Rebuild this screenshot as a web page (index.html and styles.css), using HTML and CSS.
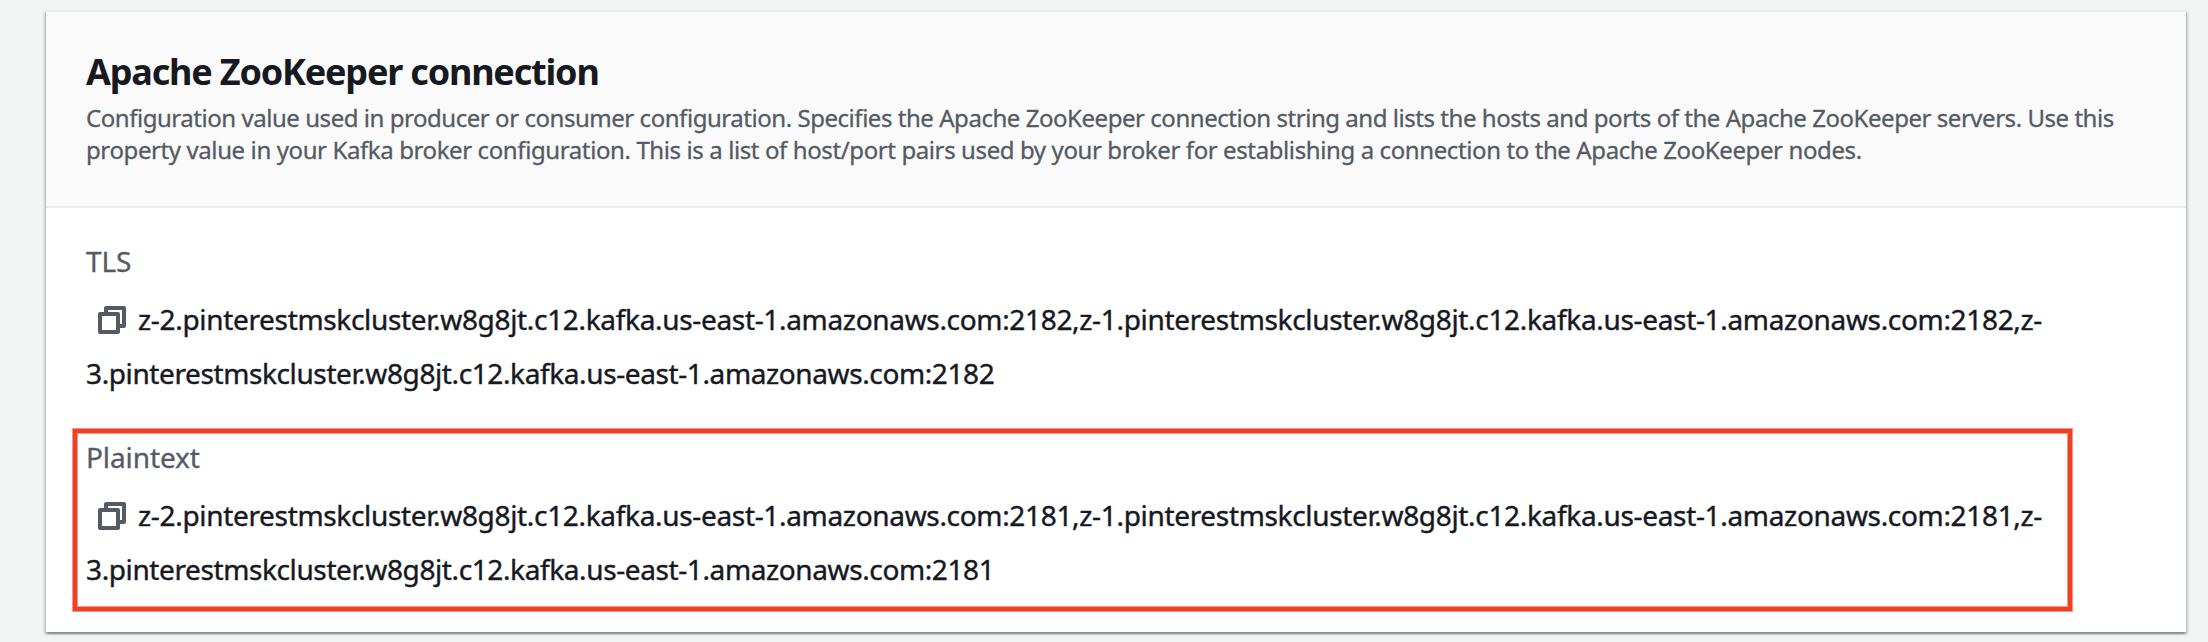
FILE: index.html
```html
<!DOCTYPE html>
<html lang="en">
<head>
<meta charset="utf-8">
<title>Apache ZooKeeper connection</title>
<link rel="stylesheet" href="styles.css">
</head>
<body>
<section class="card">
  <header class="card-header">
    <h2 class="title">Apache ZooKeeper connection</h2>
    <p class="description"><span class="line-first">Configuration value used in producer or consumer configuration. Specifies the Apache ZooKeeper connection string and lists the hosts and ports of the Apache ZooKeeper servers. Use this</span><br>property value in your Kafka broker configuration. This is a list of host/port pairs used by your broker for establishing a connection to the Apache ZooKeeper nodes.</p>
  </header>
  <div class="card-body">
    <div class="field">
      <div class="label">TLS</div>
      <div class="value"><svg class="copy" viewBox="0 0 28 28"><path d="M8 7V2H26V20H21"/><rect x="2" y="8" width="18" height="18"/></svg><span class="hosts">z-2.pinterestmskcluster.w8g8jt.c12.kafka.us-east-1.amazonaws.com:2182,z-1.pinterestmskcluster.w8g8jt.c12.kafka.us-east-1.amazonaws.com:2182,z-</span><br>3.pinterestmskcluster.w8g8jt.c12.kafka.us-east-1.amazonaws.com:2182</div>
    </div>
    <div class="field highlighted">
      <div class="label">Plaintext</div>
      <div class="value"><svg class="copy" viewBox="0 0 28 28"><path d="M8 7V2H26V20H21"/><rect x="2" y="8" width="18" height="18"/></svg><span class="hosts">z-2.pinterestmskcluster.w8g8jt.c12.kafka.us-east-1.amazonaws.com:2181,z-1.pinterestmskcluster.w8g8jt.c12.kafka.us-east-1.amazonaws.com:2181,z-</span><br>3.pinterestmskcluster.w8g8jt.c12.kafka.us-east-1.amazonaws.com:2181</div>
    </div>
  </div>
</section>
</body>
</html>
```
FILE: styles.css
```css
*, *::after { box-sizing: border-box; }
body {
  margin: 0;
  height: 642px;
  padding: 10px 22px 10px 46px;
  overflow: hidden;
  background: #f2f3f3;
  color: #16191f;
  font-family: "Noto Sans", "Open Sans", sans-serif;
}
.card {
  height: 622px;
  background: #fff;
  border-top: 2px solid #eaeded;
  box-shadow: 0 2px 2px rgba(0, 28, 36, .3), 2px 2px 2px rgba(0, 28, 36, .15), -2px 2px 2px rgba(0, 28, 36, .15);
}
.card-header {
  height: 196px;
  padding: 38px 40px 0;
  background: #fafafa;
  border-bottom: 2px solid #eaeded;
}
.title {
  margin: 0 0 8px;
  font-size: 36px;
  line-height: 44px;
  font-weight: 700;
  letter-spacing: -1.19px;
}
.description {
  margin: 0;
  color: #545b64;
  font-size: 24px;
  line-height: 32px;
  letter-spacing: -.395px;
  white-space: nowrap;
  -webkit-text-stroke: .3px;
}
.line-first { letter-spacing: -.457px; }
.card-body {
  display: flex;
  flex-direction: column;
  gap: 35px;
  padding: 31px 40px 36px;
}
.field {
  position: relative;
  font-size: 28px;
}
.label {
  margin-bottom: 9px;
  color: #545b64;
  line-height: 44px;
  letter-spacing: -.1px;
  -webkit-text-stroke: .3px;
}
.value {
  line-height: 54px;
  letter-spacing: -.39px;
  white-space: nowrap;
  -webkit-text-stroke: .4px;
}
.hosts { letter-spacing: -.327px; }
.copy {
  width: 28px;
  height: 28px;
  margin: 0 12px 0 12px;
  vertical-align: -4px;
  fill: none;
  stroke: #545b64;
  stroke-width: 4;
  stroke-linejoin: round;
}
.copy rect { fill: #fff; }
.highlighted::after {
  content: "";
  position: absolute;
  left: -13px;
  top: -6px;
  width: 1999px;
  height: 182px;
  border: 4px solid #ee4025;
  box-shadow: 0 0 0 1px rgba(238, 64, 37, .55), inset 0 0 0 1px rgba(238, 64, 37, .55);
}
```
